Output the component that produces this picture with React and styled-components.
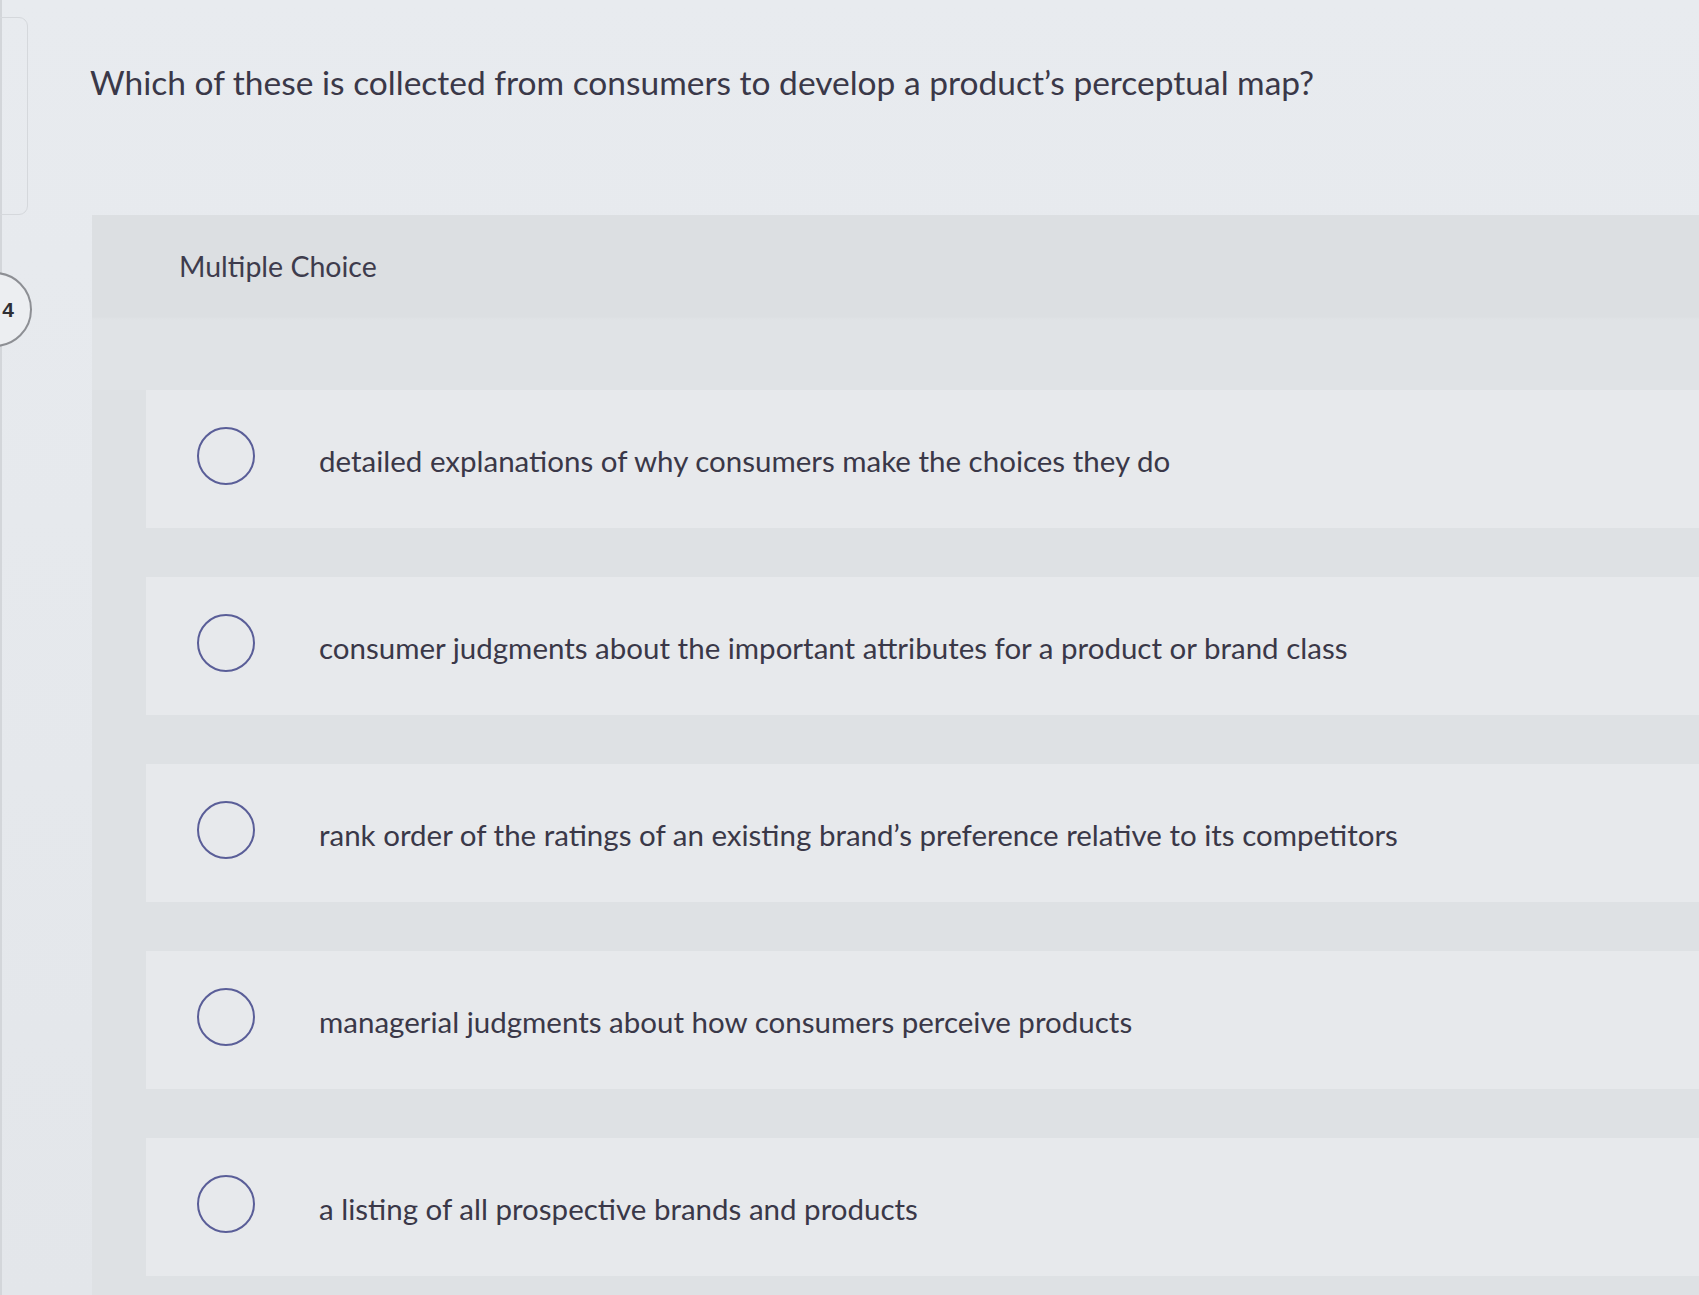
import React from 'react';
import styled, { createGlobalStyle } from 'styled-components';

const GlobalStyle = createGlobalStyle`
  html, body {
    margin: 0;
    padding: 0;
    background: #e5e8ec;
    font-family: 'Lato', 'Liberation Sans', sans-serif;
    color: #3a3848;
  }
`;

const Page = styled.div`
  display: flex;
  width: 1699px;
  height: 1295px;
  overflow: hidden;
  background: linear-gradient(180deg, #e8ebef 0%, #e3e6ea 100%);
`;

const Sidebar = styled.aside`
  width: 32px;
  flex-shrink: 0;
  display: flex;
  flex-direction: column;
  gap: 57px;
  border-left: 2px solid #d3d6da;
  box-sizing: border-box;
`;

const SideFrame = styled.div`
  height: 196px;
  margin: 17px 4px 0 -12px;
  border: 1px solid #d5d8dc;
  border-radius: 0 9px 9px 0;
`;

const Badge = styled.div`
  width: 75px;
  height: 75px;
  margin-left: -45px;
  border: 2px solid #8d8f94;
  border-radius: 50%;
  background: #eceef1;
  display: flex;
  align-items: center;
  justify-content: flex-end;
  padding-right: 16px;
  box-sizing: border-box;
  font-family: 'Liberation Sans', sans-serif;
  font-weight: 700;
  font-size: 21px;
  color: #2f2f35;
`;

const Main = styled.main`
  flex: 1;
  display: flex;
  flex-direction: column;
  padding: 62px 0 0 58px;
`;

const Question = styled.h1`
  margin: 0;
  font-size: 33.5px;
  font-weight: 400;
  line-height: 40px;
`;

const Panel = styled.section`
  flex: 1;
  margin-top: 113px;
  margin-left: 2px;
  background: #dee1e4;
  display: flex;
  flex-direction: column;
`;

const PanelHeader = styled.div`
  height: 175px;
  padding: 34px 0 0 87px;
  box-sizing: border-box;
  background: linear-gradient(180deg, #dcdfe2 0%, #dcdfe2 58%, #e0e3e6 60%, #e0e3e6 100%);
`;

const Label = styled.div`
  font-size: 28.5px;
  line-height: 34px;
  color: #3e3c4d;
`;

const Options = styled.div`
  display: flex;
  flex-direction: column;
  gap: 49px;
  padding-left: 54px;
`;

const Option = styled.label`
  height: 138px;
  display: flex;
  align-items: center;
  gap: 64px;
  padding-left: 51px;
  background: #e7e9ec;
  cursor: pointer;
`;

const Radio = styled.span`
  width: 58px;
  height: 58px;
  flex-shrink: 0;
  margin-top: -6px;
  border: 2px solid #5a5e98;
  border-radius: 50%;
  box-sizing: border-box;
`;

const OptionText = styled.span`
  font-size: 29.5px;
  line-height: 36px;
  padding-top: 4px;
  color: #3a3848;
`;

const choices = [
  'detailed explanations of why consumers make the choices they do',
  'consumer judgments about the important attributes for a product or brand class',
  'rank order of the ratings of an existing brand\u2019s preference relative to its competitors',
  'managerial judgments about how consumers perceive products',
  'a listing of all prospective brands and products',
];

export default function App() {
  return (
    <>
      <GlobalStyle />
      <Page>
        <Sidebar>
          <SideFrame />
          <Badge>4</Badge>
        </Sidebar>
        <Main>
          <Question>Which of these is collected from consumers to develop a product’s perceptual map?</Question>
          <Panel>
            <PanelHeader>
              <Label>Multiple Choice</Label>
            </PanelHeader>
            <Options>
              {choices.map((c) => (
                <Option key={c}>
                  <Radio />
                  <OptionText>{c}</OptionText>
                </Option>
              ))}
            </Options>
          </Panel>
        </Main>
      </Page>
    </>
  );
}
